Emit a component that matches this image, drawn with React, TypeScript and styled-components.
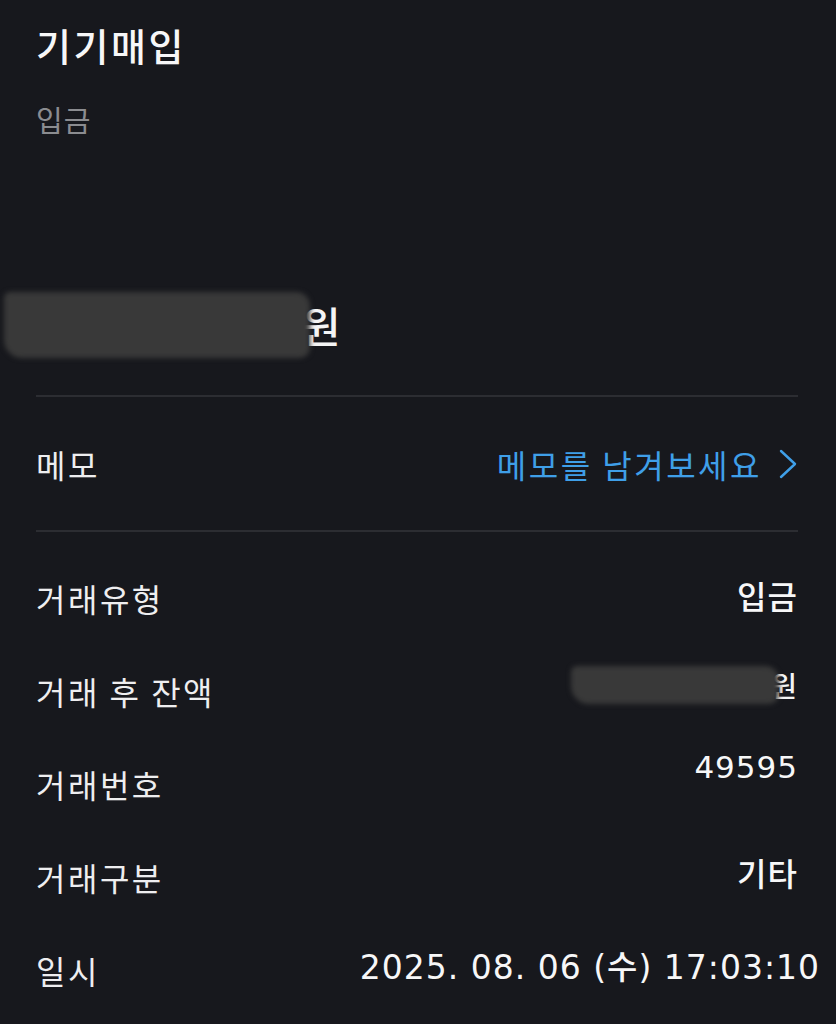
import React from 'react';
import styled, { createGlobalStyle } from 'styled-components';

// ── Global ────────────────────────────────────────────────────
const GlobalStyle = createGlobalStyle`
  html, body {
    margin: 0;
    padding: 0;
    background: #17181d;
  }
  body {
    font-family: "DejaVu Sans", "Noto Sans CJK KR", sans-serif;
    color: #f4f4f5;
    -webkit-font-smoothing: antialiased;
  }
`;

const hangul = `"Noto Sans CJK KR", "Noto Sans", sans-serif`;

// ── Styled Components ─────────────────────────────────────────
const Page = styled.main`
  width: 836px;
  min-height: 1024px;
  box-sizing: border-box;
  padding: 20px 38px 0 36px;
  display: flex;
  flex-direction: column;
  overflow: hidden;
`;

const Title = styled.h1`
  margin: 0;
  font-family: ${hangul};
  font-size: 38px;
  line-height: 50px;
  letter-spacing: 2.5px;
  font-weight: 500;
  color: #f7f7f8;
`;

const SubTitle = styled.p`
  margin: 29px 0 0;
  font-family: ${hangul};
  font-size: 29px;
  line-height: 40px;
  letter-spacing: 1px;
  font-weight: 400;
  color: #8b8c90;
`;

const AmountRow = styled.div`
  margin-top: 151px;
  height: 70px;
  display: flex;
  align-items: center;
`;

const Redacted = styled.span<{ $w: number; $h: number; $offset?: number }>`
  display: inline-block;
  width: ${({ $w }) => $w}px;
  height: ${({ $h }) => $h}px;
  margin-left: ${({ $offset = 0 }) => $offset}px;
  background: #393939;
  border-radius: 6px 14px 10px 18px;
  filter: blur(2.5px);
`;

const Won = styled.span<{ $size: number }>`
  font-family: ${hangul};
  font-size: ${({ $size }) => $size}px;
  font-weight: 500;
  color: #f4f4f5;
  margin-left: -8px;
  line-height: 1;
`;

const Divider = styled.hr`
  margin: 0;
  border: none;
  height: 2px;
  background: #2c2d32;
`;

const MemoDivider = styled(Divider)`
  margin-top: 35px;
`;

const MemoRow = styled.div`
  height: 133px;
  display: flex;
  align-items: center;
  justify-content: space-between;
`;

const Label = styled.span`
  font-family: ${hangul};
  font-size: 32px;
  line-height: 40px;
  letter-spacing: 2.5px;
  font-weight: 400;
  color: #eeeef0;
`;

const MemoLink = styled.button`
  display: flex;
  align-items: center;
  gap: 16px;
  padding: 0;
  border: none;
  background: none;
  font-family: ${hangul};
  font-size: 32px;
  line-height: 40px;
  letter-spacing: 2.5px;
  color: #3f9fe8;
  cursor: pointer;
`;

const DetailList = styled.dl`
  margin: 19px 0 0;
  display: flex;
  flex-direction: column;
`;

const DetailRow = styled.div`
  height: 93px;
  display: flex;
  align-items: center;
  justify-content: space-between;
`;

const Term = styled.dt`
  font-family: ${hangul};
  font-size: 32px;
  line-height: 40px;
  letter-spacing: 2.5px;
  color: #eeeef0;
`;

const Value = styled.dd<{ $shift?: number; $overflow?: number; $size?: number }>`
  margin: 0 ${({ $overflow = 0 }) => -$overflow}px 0 0;
  display: flex;
  align-items: center;
  font-size: ${({ $size = 32 }) => $size}px;
  line-height: 40px;
  letter-spacing: 1px;
  font-weight: 500;
  color: #f7f7f8;
  white-space: nowrap;
  transform: translateY(${({ $shift = 0 }) => $shift}px);
`;

// ── Data ──────────────────────────────────────────────────────
type Detail = {
  label: string;
  value?: string;
  redacted?: boolean;
  shift?: number;
  overflow?: number;
  size?: number;
};

const details: Detail[] = [
  { label: '거래유형', value: '입금' },
  { label: '거래 후 잔액', redacted: true, shift: -6 },
  { label: '거래번호', value: '49595', shift: -17, size: 31 },
  { label: '거래구분', value: '기타', shift: -2 },
  { label: '일시', value: '2025. 08. 06 (수) 17:03:10', shift: -2, overflow: 22, size: 33 },
];

const Chevron = () => (
  <svg width="20" height="30" viewBox="0 0 20 30" fill="none">
    <polyline points="3,2 17,15 3,28" stroke="#3f9fe8" strokeWidth="2.4" strokeLinecap="round" strokeLinejoin="round" />
  </svg>
);

// ── Component ─────────────────────────────────────────────────
export default function App() {
  return (
    <>
      <GlobalStyle />
      <Page>
        <Title>기기매입</Title>
        <SubTitle>입금</SubTitle>

        <AmountRow>
          <Redacted $w={306} $h={66} $offset={-32} />
          <Won $size={42}>원</Won>
        </AmountRow>

        <MemoDivider />
        <MemoRow>
          <Label>메모</Label>
          <MemoLink>
            메모를 남겨보세요
            <Chevron />
          </MemoLink>
        </MemoRow>
        <Divider />

        <DetailList>
          {details.map((d) => (
            <DetailRow key={d.label}>
              <Term>{d.label}</Term>
              <Value $shift={d.shift} $overflow={d.overflow} $size={d.size}>
                {d.redacted ? (
                  <>
                    <Redacted $w={208} $h={38} />
                    <Won $size={28}>원</Won>
                  </>
                ) : (
                  d.value
                )}
              </Value>
            </DetailRow>
          ))}
        </DetailList>
      </Page>
    </>
  );
}
